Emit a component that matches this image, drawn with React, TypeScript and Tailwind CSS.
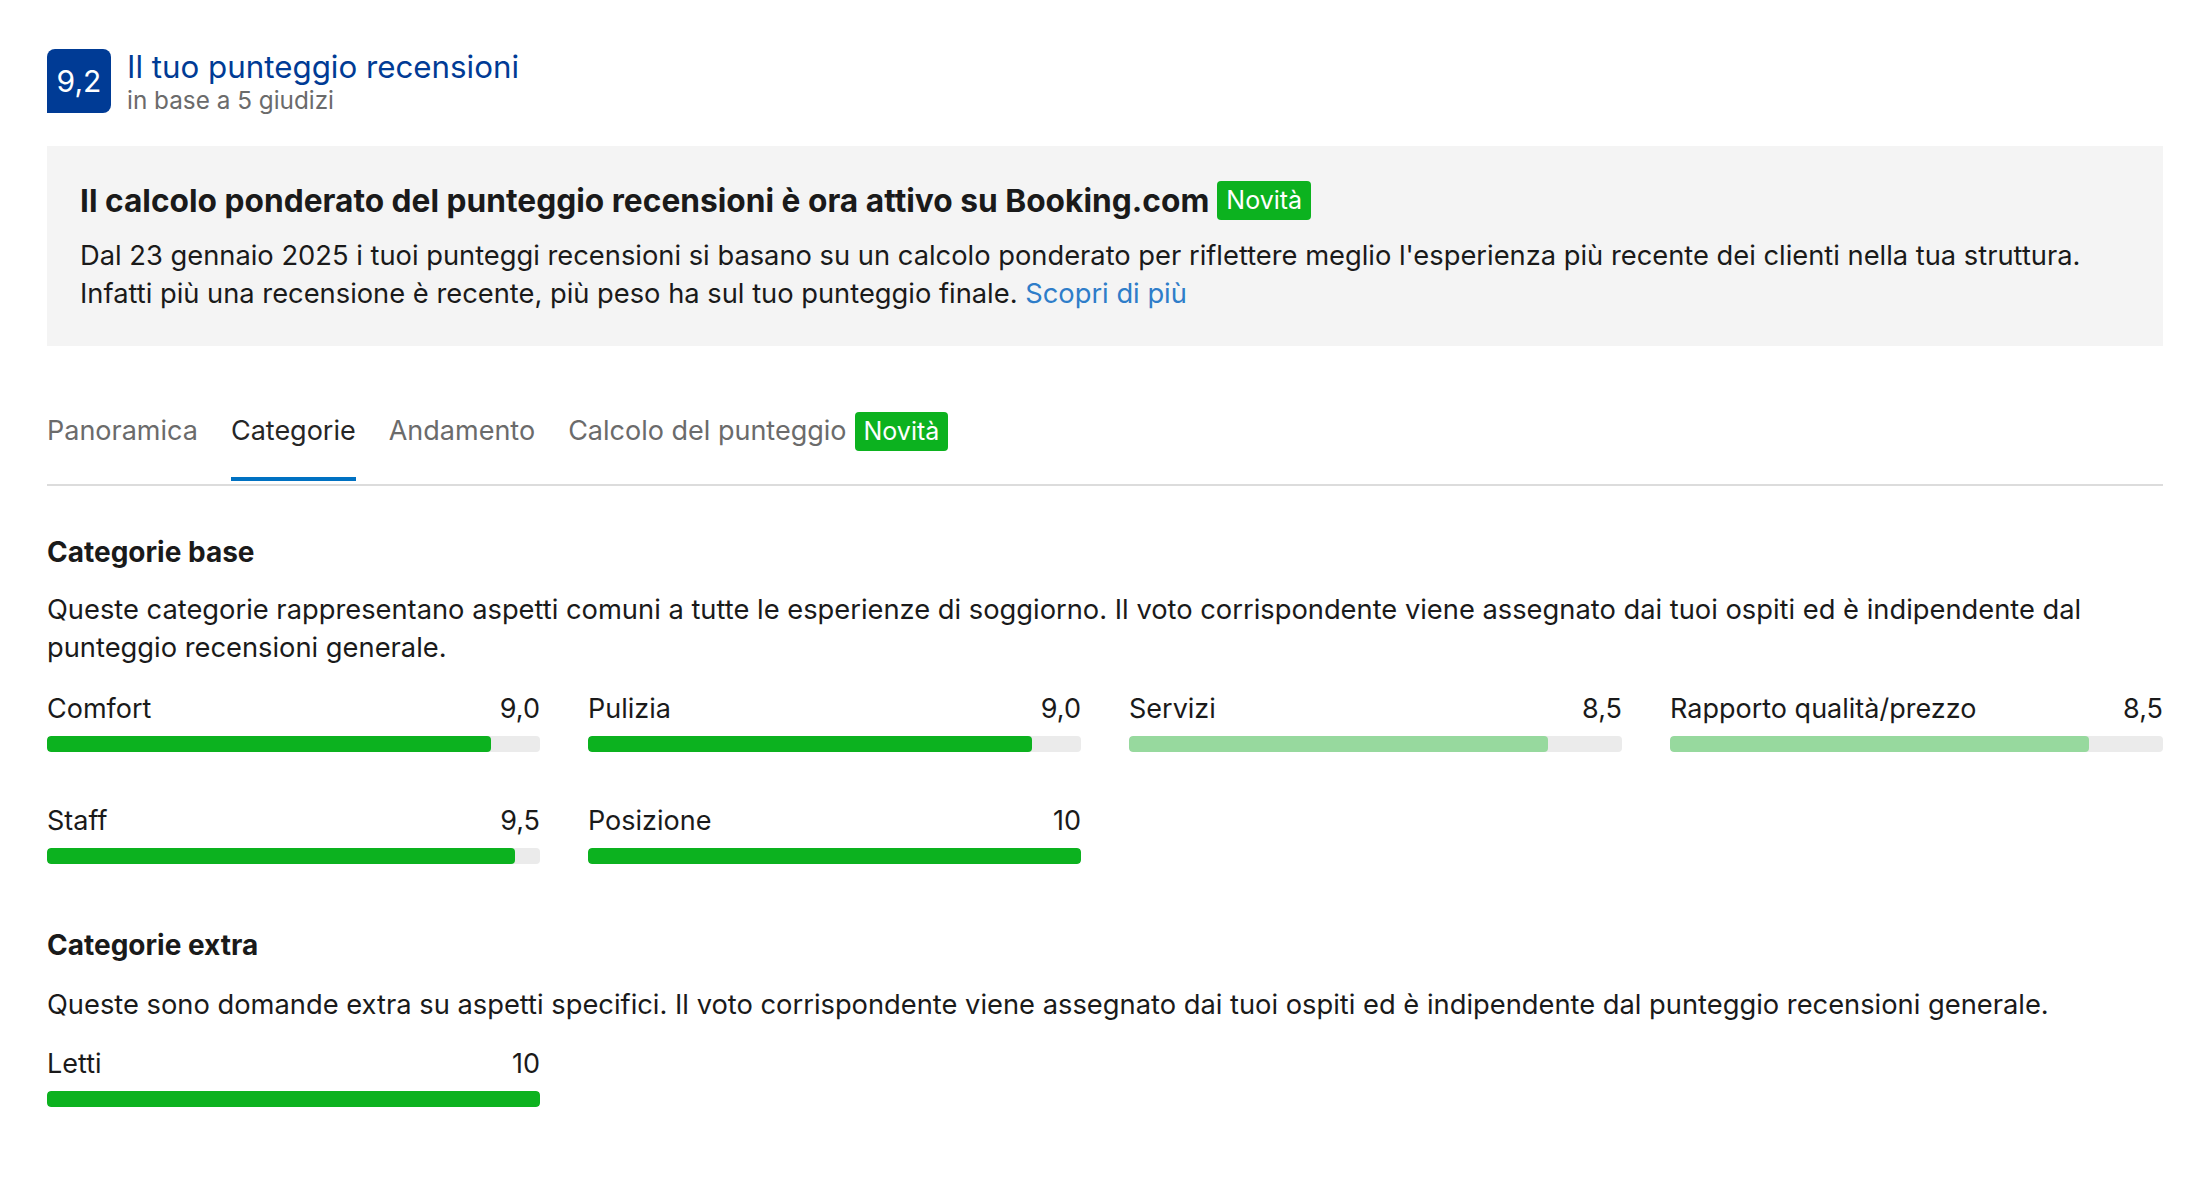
import React from 'react';

type Category = { label: string; score: number };

const BASE: Category[] = [
    { label: 'Comfort', score: 9.0 },
    { label: 'Pulizia', score: 9.0 },
    { label: 'Servizi', score: 8.5 },
    { label: 'Rapporto qualità/prezzo', score: 8.5 },
    { label: 'Staff', score: 9.5 },
    { label: 'Posizione', score: 10 },
];

const EXTRA: Category[] = [{ label: 'Letti', score: 10 }];

const TABS = ['Panoramica', 'Categorie', 'Andamento', 'Calcolo del punteggio'];

function formatScore(n: number) {
    return n === 10 ? '10' : n.toFixed(1).replace('.', ',');
}

function NewBadge() {
    return (
        <span className="inline-flex items-center rounded-[4px] bg-[#0cb21f] px-[9px] text-[25px] font-normal leading-[39px] text-white">
            Novità
        </span>
    );
}

function ScoreBar({ label, score }: Category) {
    // 9 and above gets the strong green, below that the pale one
    const strong = score >= 9;
    return (
        <div className="flex flex-col">
            <div className="flex items-center justify-between text-[27px] leading-[34px] text-[#1a1a1a]">
                <span>{label}</span>
                <span>{formatScore(score)}</span>
            </div>
            <div className="mt-[10px] h-[16px] w-full overflow-hidden rounded-[4px] bg-[#ebebeb]">
                <div
                    className={`h-full rounded-[4px] ${strong ? 'bg-[#0cb21f]' : 'bg-[#97d99e]'}`}
                    style={{ width: `${score * 10}%` }}
                />
            </div>
        </div>
    );
}

export default function App() {
    return (
        <div className="min-h-screen bg-white pl-[47px] pr-[22px] pt-[49px] font-['Inter','Noto_Sans',sans-serif] text-[#1a1a1a]">
            {/* Header */}
            <div className="flex items-start gap-[16px]">
                <div className="flex h-[64px] w-[64px] items-center justify-center rounded-t-[8px] rounded-br-[8px] bg-[#003b95] text-[30px] leading-none text-white">
                    9,2
                </div>
                <div className="flex flex-col">
                    <span className="text-[31.3px] leading-[36px] text-[#003b95]">Il tuo punteggio recensioni</span>
                    <span className="text-[24.3px] leading-[30px] text-[#6b6b6b]">in base a 5 giudizi</span>
                </div>
            </div>

            {/* Banner */}
            <div className="mt-[31px] bg-[#f4f4f4] px-[33px] pb-[33px] pt-[35px]">
                <div className="flex items-center gap-[8px]">
                    <h2 className="text-[31.7px] font-bold leading-[39px] text-[#1a1a1a]">
                        Il calcolo ponderato del punteggio recensioni è ora attivo su Booking.com
                    </h2>
                    <NewBadge />
                </div>
                <p className="mt-[17px] text-[27.3px] leading-[38px] text-[#1a1a1a]">
                    Dal 23 gennaio 2025 i tuoi punteggi recensioni si basano su un calcolo ponderato per riflettere meglio l'esperienza più recente dei clienti nella tua struttura.
                    <br />
                    Infatti più una recensione è recente, più peso ha sul tuo punteggio finale.{' '}
                    <a className="text-[#2e7dc9]">Scopri di più</a>
                </p>
            </div>

            {/* Tabs */}
            <div className="mt-[65px] flex gap-[33px] border-b-2 border-[#dcdcdc]">
                {TABS.map((t) => {
                    const active = t === 'Categorie';
                    return (
                        <div key={t} className="flex flex-col">
                            <div className={`flex h-[40px] items-center gap-[8px] text-[27px] ${active ? 'text-[#262626]' : 'text-[#6b6b6b]'}`}>
                                <span>{t}</span>
                                {t === 'Calcolo del punteggio' && <NewBadge />}
                            </div>
                            <div className={`mt-[26px] h-[4px] ${active ? 'bg-[#0071c2]' : 'bg-transparent'}`} />
                            <div className="h-[3px]" />
                        </div>
                    );
                })}
            </div>

            {/* Categorie base */}
            <h3 className="mt-[49px] text-[28px] font-bold leading-[34px]">Categorie base</h3>
            <p className="mt-[22px] text-[27.3px] leading-[38px]">
                Queste categorie rappresentano aspetti comuni a tutte le esperienze di soggiorno. Il voto corrispondente viene assegnato dai tuoi ospiti ed è indipendente dal punteggio recensioni generale.
            </p>
            <div className="mt-[25px] grid grid-cols-4 gap-x-[48px] gap-y-[52px]">
                {BASE.map((c) => (
                    <ScoreBar key={c.label} {...c} />
                ))}
            </div>

            {/* Categorie extra */}
            <h3 className="mt-[64px] text-[28px] font-bold leading-[34px]">Categorie extra</h3>
            <p className="mt-[24px] text-[27.3px] leading-[38px]">
                Queste sono domande extra su aspetti specifici. Il voto corrispondente viene assegnato dai tuoi ospiti ed è indipendente dal punteggio recensioni generale.
            </p>
            <div className="mt-[23px] grid grid-cols-4 gap-x-[48px]">
                {EXTRA.map((c) => (
                    <ScoreBar key={c.label} {...c} />
                ))}
            </div>
        </div>
    );
}
